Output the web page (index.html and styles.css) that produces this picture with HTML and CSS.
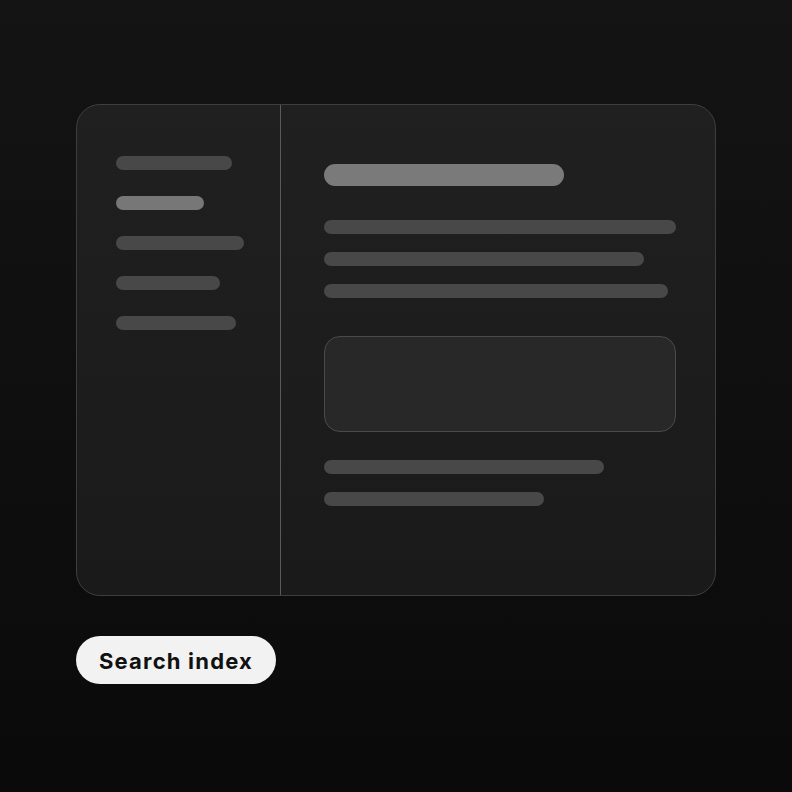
FILE: index.html
```html
<!DOCTYPE html>
<html>
<head>
<meta charset="utf-8">
<link rel="stylesheet" href="styles.css">
</head>
<body>
<div class="page">
  <div class="card">
    <div class="sidebar">
      <div class="bar" style="width:116px"></div>
      <div class="bar active" style="width:88px"></div>
      <div class="bar" style="width:128px"></div>
      <div class="bar" style="width:104px"></div>
      <div class="bar" style="width:120px"></div>
    </div>
    <div class="main">
      <div class="title"></div>
      <div class="lines">
        <div class="bar" style="width:352px"></div>
        <div class="bar" style="width:320px"></div>
        <div class="bar" style="width:344px"></div>
      </div>
      <div class="box"></div>
      <div class="lines">
        <div class="bar" style="width:280px"></div>
        <div class="bar" style="width:220px"></div>
      </div>
    </div>
  </div>
  <button class="btn">Search index</button>
</div>
</body>
</html>
```

FILE: styles.css
```css
html, body {
  margin: 0;
  height: 100%;
}
body {
  background: linear-gradient(180deg, #141414 0%, #0a0a0a 100%);
  font-family: Inter, "Noto Sans", sans-serif;
}
.page {
  padding: 104px 76px 0;
  display: flex;
  flex-direction: column;
  align-items: flex-start;
  gap: 40px;
}
.card {
  width: 640px;
  height: 492px;
  box-sizing: border-box;
  border: 1px solid #3e3e3e;
  border-radius: 24px;
  background: linear-gradient(180deg, #202020 0%, #1a1a1a 100%);
  display: flex;
  overflow: hidden;
}
.sidebar {
  width: 204px;
  border-right: 1px solid #5a5a5a;
  padding: 51px 0 0 39px;
  box-sizing: border-box;
  display: flex;
  flex-direction: column;
  gap: 26px;
  flex: none;
}
.bar {
  height: 14px;
  border-radius: 7px;
  background: #484848;
}
.bar.active {
  background: #777;
}
.main {
  flex: 1;
  padding: 59px 39px 0 43px;
  display: flex;
  flex-direction: column;
}
.title {
  width: 240px;
  height: 22px;
  border-radius: 11px;
  background: #7a7a7a;
}
.lines {
  display: flex;
  flex-direction: column;
  gap: 18px;
}
.title + .lines {
  margin-top: 34px;
}
.box {
  margin-top: 38px;
  height: 96px;
  box-sizing: border-box;
  border: 1px solid #4a4a4a;
  border-radius: 16px;
  background: #282828;
}
.box + .lines {
  margin-top: 28px;
}
.btn {
  width: 200px;
  height: 48px;
  border: none;
  border-radius: 24px;
  background: #f2f2f2;
  color: #111;
  font-family: Inter, "Noto Sans", sans-serif;
  font-weight: 700;
  font-size: 22px;
  letter-spacing: 1.2px;
  padding: 2px 0 0;
  display: flex;
  align-items: center;
  justify-content: center;
}
```
